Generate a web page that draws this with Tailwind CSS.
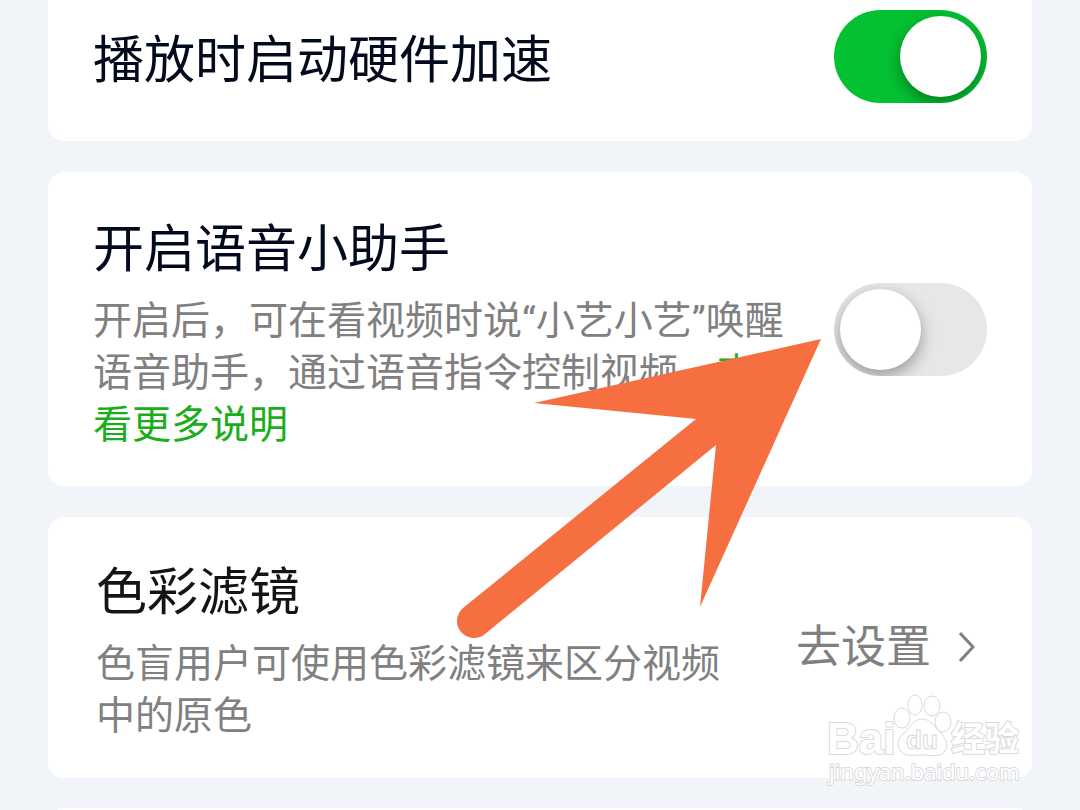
<!DOCTYPE html>
<html lang="zh-CN">
<head>
    <meta charset="UTF-8">
    <meta name="viewport" content="width=device-width, initial-scale=1.0">
    <title>播放设置</title>
    <script src="https://cdn.jsdelivr.net/npm/@tailwindcss/browser@4"></script>
</head>
<body class="bg-[#f1f4f9] font-[Roboto,'Noto_Sans_CJK_SC',sans-serif] text-[#020b1e]">

    <main class="relative h-screen overflow-hidden px-12">

        <!-- hardware acceleration -->
        <section class="flex items-center justify-between rounded-b-2xl bg-white pt-[10px] pr-[45px] pb-[38px] pl-[45px]">
            <label for="hardware" class="pt-2 text-[51px] leading-[74px]">播放时启动硬件加速</label>
            <input type="checkbox" id="hardware" checked class="h-[93px] w-[153px] shrink-0 appearance-none overflow-hidden rounded-full bg-[#e7e7e7] p-[6px] before:block before:size-[81px] before:rounded-full before:bg-white before:shadow-[0_6px_16px_rgba(0,0,0,0.35)] checked:bg-[#04c132] checked:before:ml-auto">
        </section>

        <!-- voice assistant -->
        <section class="mt-[31px] flex items-center justify-between gap-12 rounded-2xl bg-white px-[45px] py-[35px]">
            <div class="flex-1">
                <label for="voice" class="block text-[51px] leading-[86px]">开启语音小助手</label>
                <p class="mt-0.5 text-[39px] leading-[52px] text-[#808080]">开启后，可在看视频时说“小艺小艺”唤醒语音助手，通过语音指令控制视频。<a href="#" class="text-[#1aae1a]">查看更多说明</a></p>
            </div>
            <input type="checkbox" id="voice" class="h-[93px] w-[153px] shrink-0 appearance-none overflow-hidden rounded-full bg-[#e7e7e7] p-[6px] before:block before:size-[81px] before:rounded-full before:bg-white before:shadow-[0_6px_16px_rgba(0,0,0,0.35)] checked:bg-[#04c132] checked:before:ml-auto">
        </section>

        <!-- colour filter -->
        <section class="mt-[31px] flex items-center justify-between gap-12 rounded-2xl bg-white pt-[33px] pr-[57px] pb-9 pl-12 text-[#141414]">
            <div class="flex-1">
                <h2 class="text-[51px] leading-[86px]">色彩滤镜</h2>
                <p class="mt-0.5 text-[39px] leading-[52px] text-[#808080]">色盲用户可使用色彩滤镜来区分视频中的原色</p>
            </div>
            <button class="flex items-center gap-7 pt-1 text-[45px] leading-[60px] text-[#808080]">
                去设置
                <svg class="h-8 w-4" viewBox="0 0 16 32" fill="none" stroke="currentColor" stroke-width="3"><path d="M1 1 L14 15 L1 29"/></svg>
            </button>
        </section>

        <section class="mt-[30px] h-20 rounded-t-2xl bg-white"></section>

        <!-- pointer to the voice switch -->
        <svg class="pointer-events-none absolute top-[330px] left-[450px] h-[320px] w-[380px]" viewBox="450 330 380 320" fill="#f66f40">
            <path d="M821 339 L534 403 L696 419 L463 608 A17 17 0 0 0 485 634 L716 445 L700 607 Z"/>
        </svg>

        <!-- watermark -->
        <svg class="pointer-events-none absolute top-[690px] left-[820px] h-[100px] w-[210px]" viewBox="820 690 210 100" fill="#fff" stroke="#d9dadc" stroke-width="1">
            <g stroke-width="2" paint-order="stroke" font-weight="700">
                <text x="827" y="754" font-family="Liberation Sans" font-size="44">Bai</text>
                <text x="951" y="751" font-family="Noto Sans CJK SC" font-size="34">经验</text>
            </g>
            <ellipse cx="902" cy="718" rx="8" ry="10"/>
            <ellipse cx="915" cy="705" rx="7" ry="10"/>
            <ellipse cx="932" cy="706" rx="8" ry="10"/>
            <ellipse cx="943" cy="722" rx="8" ry="10"/>
            <path d="M922 719 C914 719 910 727 905 732 C899 737 896 743 900 750 C904 757 913 755 922 755 C931 755 940 758 945 751 C949 744 945 737 940 732 C934 727 931 719 922 719 Z"/>
            <text x="906" y="749" font-family="Liberation Sans" font-size="26" font-weight="700">du</text>
            <text x="829" y="780" font-family="Noto Sans" font-size="22" stroke-width="2" paint-order="stroke">jingyan.baidu.com</text>
        </svg>
    </main>

</body>
</html>
